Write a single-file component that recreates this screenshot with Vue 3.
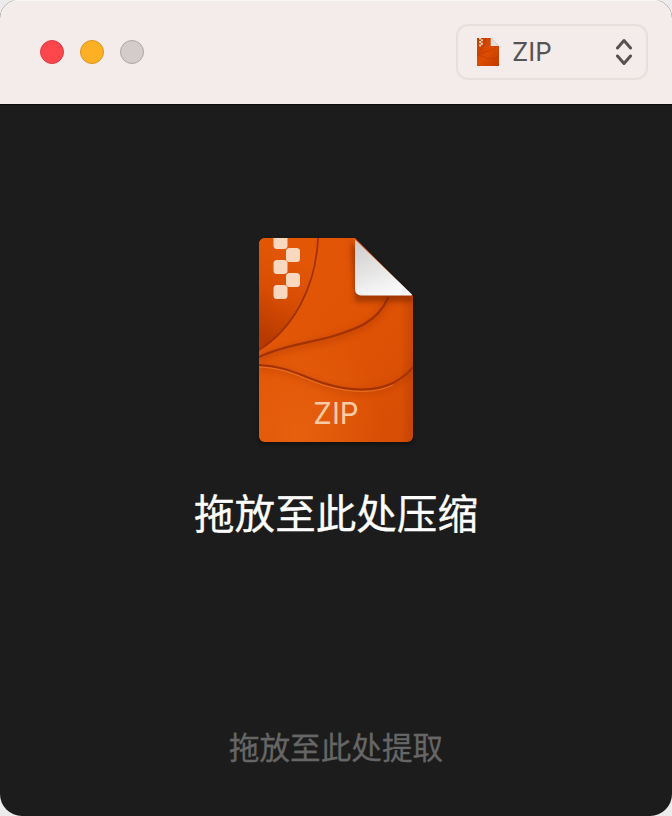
<script setup>
const zipperBlocks = [
  [14.5, -6, 14, 17],
  [27, 10, 14, 14],
  [14.5, 22, 14, 14],
  [27, 35, 14, 14],
  [14.5, 47, 14, 14],
]
</script>

<template>
  <div class="window">
    <header class="titlebar">
      <div class="lights">
        <span class="light red"></span>
        <span class="light yellow"></span>
        <span class="light grey"></span>
      </div>
      <div class="select">
        <svg class="mini" viewBox="0 0 154 204" preserveAspectRatio="none">
          <defs>
            <linearGradient id="miniBody" x1="0" y1="0" x2="1" y2="1">
              <stop offset="0" stop-color="#c23c00" />
              <stop offset="0.5" stop-color="#dc4c02" />
              <stop offset="1" stop-color="#c23c00" />
            </linearGradient>
          </defs>
          <path d="M0 0H96L154 58V204H0Z" fill="url(#miniBody)" />
          <path d="M59 0C55 50 35 90 0 112M129 60C110 100 50 100 0 119M0 127C50 130 60 150 98 152C125 152 145 145 154 129" fill="none" stroke="#a83200" stroke-width="4" opacity="0.7" />
          <rect v-for="(b, i) in zipperBlocks" :key="i" :x="b[0]" :y="b[1]" :width="b[2]" :height="b[3]" fill="#f6d6bd" />
          <path d="M96 0L154 58H96Z" fill="#e3e1df" />
        </svg>
        <span class="select-label">ZIP</span>
        <svg class="chevrons" viewBox="0 0 16 28">
          <path d="M1.5 10L8 2.5L14.5 10M1.5 18L8 25.5L14.5 18" fill="none" stroke="#575353" stroke-width="3" stroke-linecap="round" stroke-linejoin="round" />
        </svg>
      </div>
    </header>

    <main class="content">
      <svg class="doc" viewBox="0 0 154 204">
        <defs>
          <linearGradient id="body" x1="0" y1="0" x2="1" y2="1">
            <stop offset="0" stop-color="#e45707" />
            <stop offset="0.55" stop-color="#df5305" />
            <stop offset="1" stop-color="#d64d04" />
          </linearGradient>
          <radialGradient id="glow" cx="0.25" cy="0.95" r="0.55">
            <stop offset="0" stop-color="#ea6612" stop-opacity="0.7" />
            <stop offset="1" stop-color="#ea6612" stop-opacity="0" />
          </radialGradient>
          <linearGradient id="edge" x1="0" y1="0" x2="1" y2="0">
            <stop offset="0.92" stop-color="#b03c00" stop-opacity="0" />
            <stop offset="1" stop-color="#b03c00" stop-opacity="0.5" />
          </linearGradient>
          <linearGradient id="fold" x1="0.2" y1="0" x2="0.6" y2="1">
            <stop offset="0" stop-color="#cfcdcc" />
            <stop offset="1" stop-color="#fbfbfb" />
          </linearGradient>
          <linearGradient id="wedge" gradientUnits="userSpaceOnUse" x1="45" y1="25" x2="5" y2="100">
            <stop offset="0" stop-color="#e25606" />
            <stop offset="0.45" stop-color="#d94e03" />
            <stop offset="1" stop-color="#b83a00" />
          </linearGradient>
          <clipPath id="sheet">
            <path d="M6 0H96L154 58V198a6 6 0 0 1-6 6H6a6 6 0 0 1-6-6V6a6 6 0 0 1 6-6Z" />
          </clipPath>
          <filter id="soft" x="-20%" y="-20%" width="140%" height="140%">
            <feGaussianBlur stdDeviation="2.5" />
          </filter>
          <filter id="blur1" x="-10%" y="-10%" width="120%" height="120%">
            <feGaussianBlur stdDeviation="0.6" />
          </filter>
          <filter id="blur3" x="-20%" y="-20%" width="140%" height="140%">
            <feGaussianBlur stdDeviation="3" />
          </filter>
        </defs>
        <path d="M6 2H96L154 60V200a6 6 0 0 1-6 6H6a6 6 0 0 1-6-6Z" fill="#000" opacity="0.45" filter="url(#soft)" />
        <g clip-path="url(#sheet)">
          <rect width="154" height="204" fill="url(#body)" />
          <rect width="154" height="204" fill="url(#glow)" />
          <rect width="154" height="204" fill="url(#edge)" />
          <path d="M0 0H59C57 48 35 90 0 112Z" fill="url(#wedge)" />
          <g fill="none" stroke="#a93600" stroke-linecap="round" filter="url(#blur3)" opacity="0.45">
            <path d="M129 62C118 87 95 94 71 101C50 107 25 109 0 121" stroke-width="5" />
            <path d="M0 129C28 130 42 140 64 147C90 155 115 156 134 147C143 142 150 137 154 131" stroke-width="4" />
          </g>
          <g fill="none" stroke="#a23300" stroke-linecap="round" filter="url(#blur1)">
            <path d="M59 0C57 48 35 90 0 112" stroke-width="1.8" />
            <path d="M129 60C118 85 95 92 71 99C50 105 25 107 0 119" stroke-width="2.2" />
            <path d="M0 127C28 128 42 138 64 145C90 153 115 154 134 145C143 140 150 135 154 129" stroke-width="2" />
          </g>
          <path d="M0 129C28 130 42 140 64 147C90 155 115 156 134 147" fill="none" stroke="#f38230" stroke-width="1" opacity="0.7" />
          <rect v-for="(b, i) in zipperBlocks" :key="i" :x="b[0]" :y="b[1]" :width="b[2]" :height="b[3]" rx="3.5" fill="#f8d8bf" />
          <path d="M92 4L154 58V64H96Z" fill="#6e2400" opacity="0.5" filter="url(#soft)" />
        </g>
        <path d="M96 1.5L153 56.5A1 1 0 0 1 152 57.5H102A6 6 0 0 1 96 51.5Z" fill="url(#fold)" />
        <text x="77" y="185.5" text-anchor="middle" class="doc-label">ZIP</text>
      </svg>
      <h1 class="primary">拖放至此处压缩</h1>
      <p class="secondary">拖放至此处提取</p>
    </main>
  </div>
</template>

<style scoped>
.window {
  width: 672px;
  height: 816px;
  display: flex;
  flex-direction: column;
  border-radius: 18px 18px 22px 22px;
  overflow: hidden;
  background: #1c1c1c;
  font-family: "Noto Sans CJK SC", "Noto Sans", sans-serif;
}

.titlebar {
  height: 105px;
  box-sizing: border-box;
  flex: none;
  display: flex;
  align-items: center;
  justify-content: space-between;
  padding: 0 24px 0 40px;
  background: #f3ecea;
  box-shadow: inset 0 1px 0 #faf8f7;
  border-bottom: 1px solid #0b0b0b;
}

.lights {
  display: flex;
  gap: 16px;
}

.light {
  width: 24px;
  height: 24px;
  box-sizing: border-box;
  border-radius: 50%;
  border: 1px solid;
}

.red {
  background: #fe474c;
  border-color: #dd3c42;
}

.yellow {
  background: #feb024;
  border-color: #dd9320;
}

.grey {
  background: #d3cccb;
  border-color: #aea6a5;
}

.select {
  width: 192px;
  height: 56px;
  box-sizing: border-box;
  display: flex;
  align-items: center;
  padding: 0 14px 0 19px;
  border: 2px solid #e6dfdc;
  border-radius: 12px;
}

.mini {
  width: 22px;
  height: 28px;
  flex: none;
}

.select-label {
  margin-left: 13px;
  flex: 1;
  font-family: Inter, "Liberation Sans", sans-serif;
  font-size: 26px;
  line-height: 1;
  color: #575353;
}

.chevrons {
  width: 16px;
  height: 28px;
  flex: none;
}

.content {
  flex: 1;
  display: flex;
  flex-direction: column;
  align-items: center;
}

.doc {
  width: 154px;
  height: 204px;
  margin-top: 133px;
  flex: none;
  overflow: visible;
}

.doc-label {
  font-family: Inter, "Liberation Sans", sans-serif;
  font-size: 29.5px;
  fill: #f9cba6;
}

.primary {
  margin: 41px 0 0;
  font-size: 40.6px;
  line-height: 58px;
  font-weight: 400;
  -webkit-text-stroke: 0.3px #ffffff;
  color: #ffffff;
}

.secondary {
  margin: auto 0 48px;
  font-size: 30.6px;
  line-height: 44px;
  font-weight: 400;
  -webkit-text-stroke: 0.3px #666666;
  color: #666666;
}
</style>

<style>
html,
body {
  background: #ececec;
}
</style>
